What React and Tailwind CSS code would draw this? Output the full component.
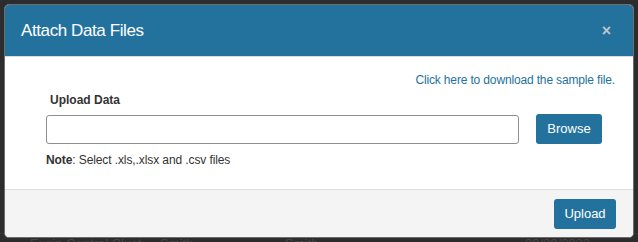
import React from 'react';

const App = () => {
  return (
    <div className="relative w-[638px] h-[242px] overflow-hidden bg-[#2d2d2d] font-['Liberation_Sans',Arial,sans-serif]">
      {/* Page content behind the overlay */}
      <div className="pt-[233px]">
        <div className="flex items-start h-[20px] text-[13px] text-[#474747] border-t border-[#383838]">
          <span className="ml-[30px] w-[130px]">Eusin Central Clust</span>
          <span className="w-[125px]">Smith</span>
          <span className="w-[240px]">Smith</span>
          <span>09/29/2023</span>
        </div>
      </div>

      {/* Modal */}
      <div className="absolute top-[4px] left-[4px] w-[630px] h-[234px] flex flex-col rounded-[5px] overflow-hidden border border-[#6d6d6d] bg-white">
        <div className="flex items-center justify-between h-[52px] pl-[16px] pr-[22px] bg-[#23729e] border-b border-[#dcdcdc]">
          <h1 className="text-[17px] text-white tracking-[-0.4px]">Attach Data Files</h1>
          <span className="text-[#bfc5ca] text-[16px] font-bold leading-none">×</span>
        </div>

        <div className="flex-1 pt-[15px] pl-[41px] pr-[18px]">
          <div className="text-right text-[12px] leading-[17px] text-[#23729e] tracking-[-0.15px]">
            Click here to download the sample file.
          </div>
          <div className="mt-[3px] pl-[4px] text-[12px] leading-[17px] font-bold text-[#333]">Upload Data</div>
          <div className="flex items-center mt-[5px]">
            <div className="w-[473px] h-[29px] border border-[#8f8f8f] rounded-[3px] bg-white"></div>
            <button className="ml-[17px] w-[66px] h-[30px] rounded-[3px] bg-[#23729e] text-white text-[13px]">
              Browse
            </button>
          </div>
          <div className="mt-[8px] text-[12px] leading-[17px] text-[#333] tracking-[-0.1px]">
            <span className="font-bold">Note</span>: Select .xls,.xlsx and .csv files
          </div>
        </div>

        <div className="flex justify-end items-start h-[48px] pt-[9px] pr-[17px] bg-[#f4f4f4] border-t border-[#dedede]">
          <button className="w-[62px] h-[30px] rounded-[3px] bg-[#23729e] text-white text-[13px]">
            Upload
          </button>
        </div>
      </div>
    </div>
  );
};

export default App;
